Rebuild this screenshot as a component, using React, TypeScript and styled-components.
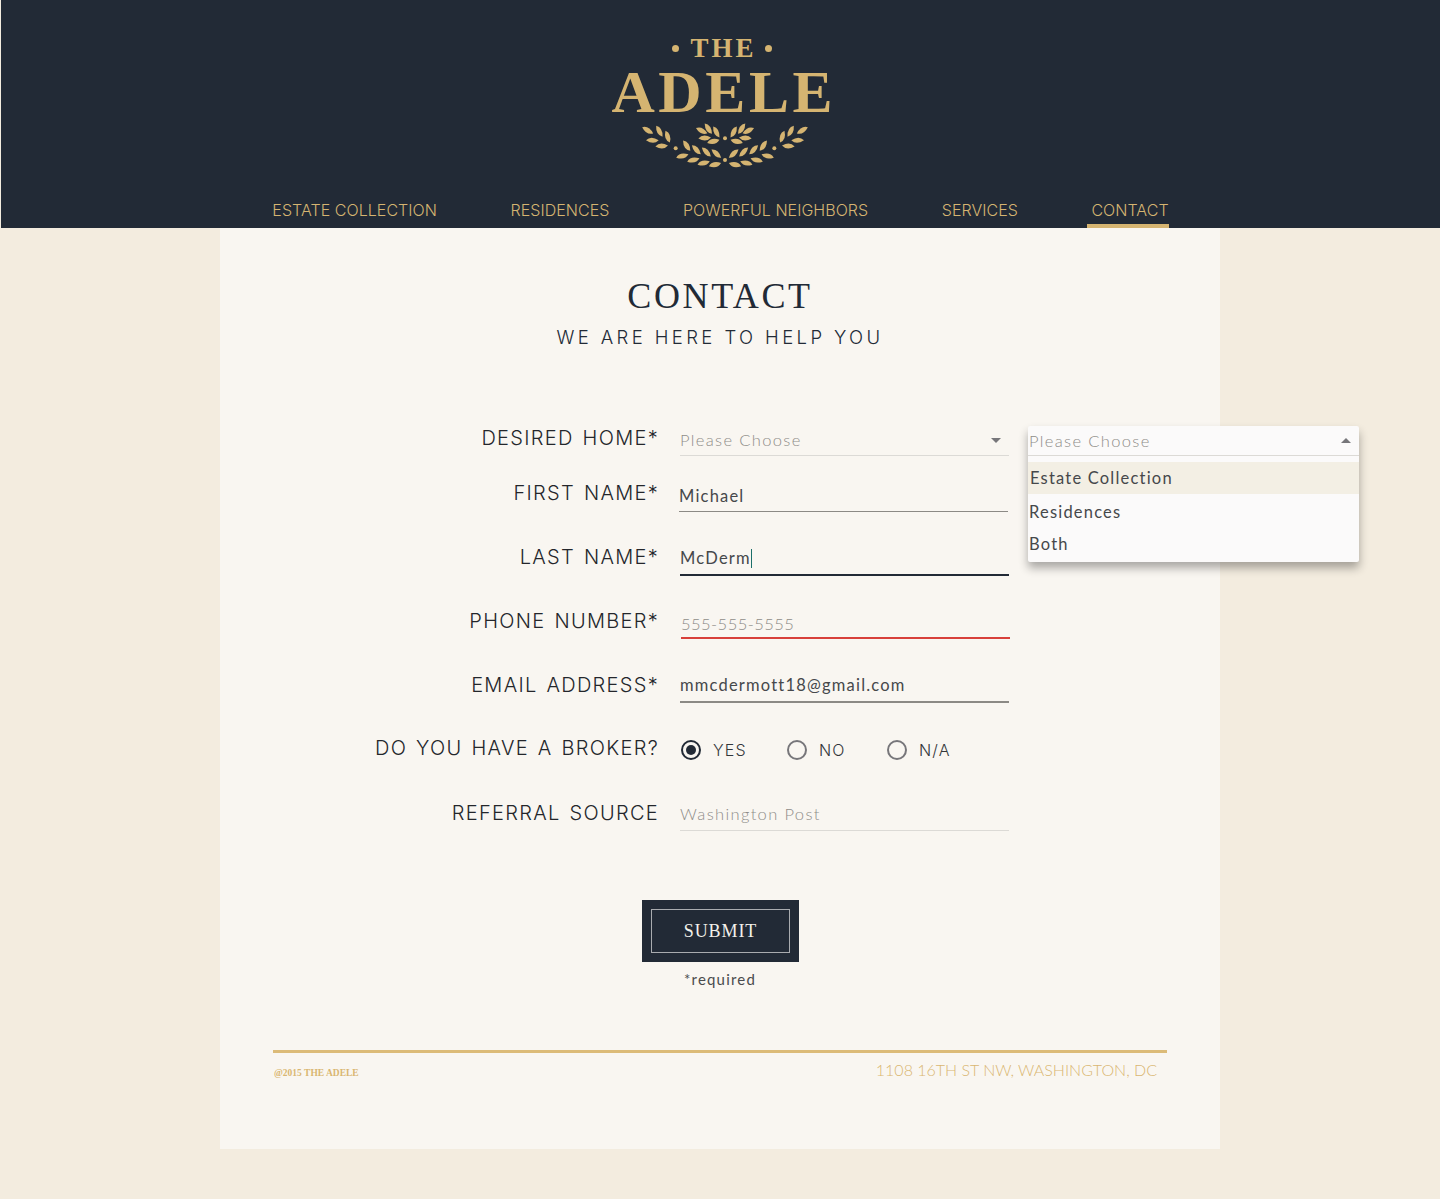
import styled, { createGlobalStyle } from "styled-components"

const GlobalStyle = createGlobalStyle`
  html, body { margin: 0; padding: 0; background: #f3ecdf; }
  body { font-family: "Lato", "Liberation Sans", sans-serif; }
`

const navy = "#222a36"
const gold = "#d5b471"

const Header = styled.header`
  margin-left: 1px;
  height: 228px;
  background: ${navy};
  display: flex;
  flex-direction: column;
  align-items: center;
  overflow: hidden;
`
const Logo = styled.div`
  margin: 31px 0 0 3px;
  height: 144px;
  width: 240px;
  display: flex;
  flex-direction: column;
  align-items: center;
  color: ${gold};
  font-family: "Liberation Serif", serif;
  font-weight: 700;
`
const LogoThe = styled.div`
  display: flex;
  align-items: center;
  gap: 11px;
  font-size: 27px;
  line-height: 34px;
  letter-spacing: 3px;
`
const LogoTheText = styled.span`
  margin-right: -3px;
`
const LogoDot = styled.span`
  width: 7px;
  height: 7px;
  border-radius: 50%;
  background: ${gold};
`
const LogoName = styled.div`
  font-size: 60px;
  line-height: 54px;
  letter-spacing: 3.6px;
  margin-right: -3.6px;
`
const Laurel = styled.svg`
  display: block;
  width: 170px;
  height: 47px;
  margin: 4px 0 0 6px;
`
const Nav = styled.nav`
  display: flex;
  gap: 73.5px;
  margin-top: 27px;
`
const NavItem = styled.a<{ $active?: boolean }>`
  font-family: "Inter", sans-serif;
  font-weight: 300;
  font-size: 16px;
  letter-spacing: 0.05px;
  line-height: 16px;
  color: ${gold};
  height: 26px;
  box-sizing: border-box;
  ${(props) => props.$active && `
    border-bottom: 4px solid ${gold};
    padding-left: 4px;
    margin-left: -4px;
  `}
`
const Card = styled.main`
  width: 1000px;
  height: 921px;
  margin: 0 auto 50px;
  background: #f9f6f1;
  display: flex;
  flex-direction: column;
`
const Title = styled.h1`
  margin: 47px 0 0;
  font-family: "Liberation Serif", serif;
  font-weight: 400;
  font-size: 36px;
  line-height: 42px;
  letter-spacing: 2.6px;
  color: ${navy};
  text-align: center;
`
const Subtitle = styled.h2`
  margin: 9px 0 0;
  font-family: "Inter", sans-serif;
  font-weight: 300;
  font-size: 18.5px;
  line-height: 22px;
  letter-spacing: 3.4px;
  color: ${navy};
  text-align: center;
`
const Form = styled.form`
  display: flex;
  flex-direction: column;
  margin-top: 72px;
`
const Row = styled.div<{ $height: number }>`
  display: flex;
  align-items: flex-end;
  height: ${(props) => props.$height}px;
`
const Label = styled.label<{ $drop: number }>`
  width: 439px;
  flex: none;
  text-align: right;
  font-family: "Inter", sans-serif;
  font-weight: 300;
  font-size: 20px;
  line-height: 24px;
  letter-spacing: 1.3px;
  word-spacing: 2px;
  color: #24262b;
  margin-bottom: ${(props) => props.$drop}px;
`
const Field = styled.div<{ $line: string; $weight: number; $inset: number; $lift: number }>`
  position: relative;
  width: 329px;
  flex: none;
  margin-left: ${(props) => 21 + props.$inset}px;
  box-sizing: border-box;
  border-bottom: ${(props) => props.$weight}px solid ${(props) => props.$line};
  padding-bottom: ${(props) => props.$lift}px;
  display: flex;
  align-items: center;
  justify-content: space-between;
`
const Value = styled.span<{ $muted?: boolean; $tight?: boolean }>`
  font-size: 16.5px;
  line-height: 20px;
  font-weight: ${(props) => (props.$muted ? 300 : 400)};
  letter-spacing: ${(props) => (props.$tight ? 0.45 : props.$muted ? 1.35 : 1.2)}px;
  color: ${(props) => (props.$muted ? "#8f8d89" : "#46484b")};
`
const Caret = styled.span`
  display: inline-block;
  width: 1px;
  height: 19px;
  background: #1c6f6a;
  vertical-align: -4px;
`
const Arrow = styled.span<{ $up?: boolean }>`
  width: 0;
  height: 0;
  margin-right: 8px;
  border-left: 5px solid transparent;
  border-right: 5px solid transparent;
  ${(props) => (props.$up ? "border-bottom" : "border-top")}: 5px solid #77767a;
`
const Menu = styled.div`
  position: absolute;
  left: 348px;
  top: -4px;
  width: 331px;
  height: 136px;
  background: #fbfafa;
  border-radius: 2px;
  box-shadow: 0 6px 10px rgba(0, 0, 0, 0.32);
  z-index: 2;
`
const MenuHead = styled.div`
  height: 30px;
  box-sizing: border-box;
  padding-left: 1px;
  border-bottom: 1px solid #dcdad6;
  display: flex;
  align-items: center;
  justify-content: space-between;
`
const MenuList = styled.div`
  padding-top: 6px;
`
const MenuItem = styled.div<{ $active?: boolean; $height: number }>`
  height: ${(props) => props.$height}px;
  display: flex;
  align-items: center;
  padding-left: ${(props) => (props.$active ? 2 : 1)}px;
  background: ${(props) => (props.$active ? "#f3efe4" : "transparent")};
`
const Radios = styled.div`
  display: flex;
  margin-left: 22px;
  margin-bottom: 1px;
`
const RadioOption = styled.div<{ $width: number }>`
  display: flex;
  align-items: center;
  gap: 12px;
  width: ${(props) => props.$width}px;
`
const RadioMark = styled.span<{ $checked?: boolean }>`
  width: 20px;
  height: 20px;
  box-sizing: border-box;
  border-radius: 50%;
  border: 2px solid ${(props) => (props.$checked ? navy : "#77767a")};
  display: flex;
  align-items: center;
  justify-content: center;
  &::after {
    content: "";
    display: ${(props) => (props.$checked ? "block" : "none")};
    width: 10px;
    height: 10px;
    border-radius: 50%;
    background: ${navy};
  }
`
const RadioText = styled.span`
  font-family: "Inter", sans-serif;
  font-weight: 300;
  font-size: 16px;
  letter-spacing: 1.2px;
  color: #33363a;
`
const SubmitBox = styled.button`
  align-self: center;
  margin-top: 69px;
  margin-right: -1px;
  width: 157px;
  height: 62px;
  padding: 9px;
  border: none;
  background: ${navy};
  display: flex;
`
const SubmitInner = styled.span`
  flex: 1;
  border: 1px solid #a9abaf;
  display: flex;
  align-items: center;
  justify-content: center;
  font-family: "Liberation Serif", serif;
  font-size: 18px;
  letter-spacing: 0.9px;
  color: #f3f1ec;
  padding-top: 1px;
`
const Required = styled.div`
  margin-top: 8px;
  text-align: center;
  font-size: 15px;
  line-height: 18px;
  font-weight: 400;
  letter-spacing: 1.2px;
  color: #4a4b4d;
`
const Footer = styled.footer`
  margin: 62px 53px 0;
  border-top: 3px solid #dcbb78;
  display: flex;
  align-items: flex-start;
  justify-content: space-between;
  padding: 7px 10px 0 1px;
  color: #d9b672;
`
const Copyright = styled.span`
  font-family: "Liberation Serif", serif;
  font-weight: 700;
  font-size: 9.5px;
  line-height: 12px;
  margin-top: 7px;
`
const Address = styled.span`
  font-weight: 300;
  font-size: 16px;
  line-height: 20px;
`

const leaves = [
  [143, 332, 30], [178, 335, 60], [203, 351, 70], [157, 362, 0], [185, 379, -5],
  [247, 409, -15], [280, 421, -15], [311, 430, -15], [345, 435, -15],
  [260, 378, 55], [289, 390, 45], [319, 397, 45], [349, 402, 40],
  [305, 333, 25], [325, 327, 55], [349, 337, 60], [314, 355, -5], [340, 365, -15],
]

const LaurelHalf = () => (
  <>
    {leaves.map(([x, y, r]) => (
      <path
        key={`${x}-${y}`}
        d="M-19 0Q-4 -15 19 0Q4 15 -19 0Z"
        transform={`translate(${x} ${y}) rotate(${r})`}
      />
    ))}
    <circle cx="227" cy="386" r="6" />
  </>
)

const rows = [
  { label: "FIRST NAME*", height: 56, drop: 7, line: "#8c8a85", weight: 1, inset: -1, lift: 5, text: "Michael" },
  { label: "LAST NAME*", height: 64, drop: 7, line: navy, weight: 2, inset: 0, lift: 6, text: "McDerm", caret: true },
  { label: "PHONE NUMBER*", height: 63, drop: 6, line: "#d8403a", weight: 2, inset: 1, lift: 3, text: "555-555-5555", muted: true, tight: true },
  { label: "EMAIL ADDRESS*", height: 64, drop: 6, line: "#8c8a85", weight: 2, inset: 0, lift: 6, text: "mmcdermott18@gmail.com" },
]

const App = () => {
  return (
    <>
      <GlobalStyle />
      <Header>
        <Logo>
          <LogoThe>
            <LogoDot />
            <LogoTheText>THE</LogoTheText>
            <LogoDot />
          </LogoThe>
          <LogoName>ADELE</LogoName>
          <Laurel viewBox="120 310 510 141" fill={gold}>
            <LaurelHalf />
            <g transform="translate(750 0) scale(-1 1)">
              <LaurelHalf />
            </g>
            <circle cx="375" cy="356" r="6" />
            <circle cx="375" cy="421" r="6" />
          </Laurel>
        </Logo>
        <Nav>
          <NavItem>ESTATE COLLECTION</NavItem>
          <NavItem>RESIDENCES</NavItem>
          <NavItem>POWERFUL NEIGHBORS</NavItem>
          <NavItem>SERVICES</NavItem>
          <NavItem $active>CONTACT</NavItem>
        </Nav>
      </Header>
      <Card>
        <Title>CONTACT</Title>
        <Subtitle>WE ARE HERE TO HELP YOU</Subtitle>
        <Form>
          <Row $height={36}>
            <Label $drop={6}>DESIRED HOME*</Label>
            <Field $line="#dcdad6" $weight={1} $inset={0} $lift={5}>
              <Value $muted>Please Choose</Value>
              <Arrow />
              <Menu>
                <MenuHead>
                  <Value $muted>Please Choose</Value>
                  <Arrow $up />
                </MenuHead>
                <MenuList>
                  <MenuItem $active $height={32}><Value>Estate Collection</Value></MenuItem>
                  <MenuItem $height={36}><Value>Residences</Value></MenuItem>
                  <MenuItem $height={28}><Value>Both</Value></MenuItem>
                </MenuList>
              </Menu>
            </Field>
          </Row>
          {rows.map((row) => (
            <Row key={row.label} $height={row.height}>
              <Label $drop={row.drop}>{row.label}</Label>
              <Field $line={row.line} $weight={row.weight} $inset={row.inset} $lift={row.lift}>
                <Value $muted={row.muted} $tight={row.tight}>
                  {row.text}
                  {row.caret && <Caret />}
                </Value>
              </Field>
            </Row>
          ))}
          <Row $height={58}>
            <Label $drop={1}>DO YOU HAVE A BROKER?</Label>
            <Radios>
              <RadioOption $width={106}><RadioMark $checked /><RadioText>YES</RadioText></RadioOption>
              <RadioOption $width={100}><RadioMark /><RadioText>NO</RadioText></RadioOption>
              <RadioOption $width={100}><RadioMark /><RadioText>N/A</RadioText></RadioOption>
            </Radios>
          </Row>
          <Row $height={70}>
            <Label $drop={6}>REFERRAL SOURCE</Label>
            <Field $line="#dcdad6" $weight={1} $inset={0} $lift={6}>
              <Value $muted>Washington Post</Value>
            </Field>
          </Row>
          <SubmitBox type="button">
            <SubmitInner>SUBMIT</SubmitInner>
          </SubmitBox>
          <Required>*required</Required>
        </Form>
        <Footer>
          <Copyright>@2015 THE ADELE</Copyright>
          <Address>1108 16TH ST NW, WASHINGTON, DC</Address>
        </Footer>
      </Card>
    </>
  )
}

export default App
